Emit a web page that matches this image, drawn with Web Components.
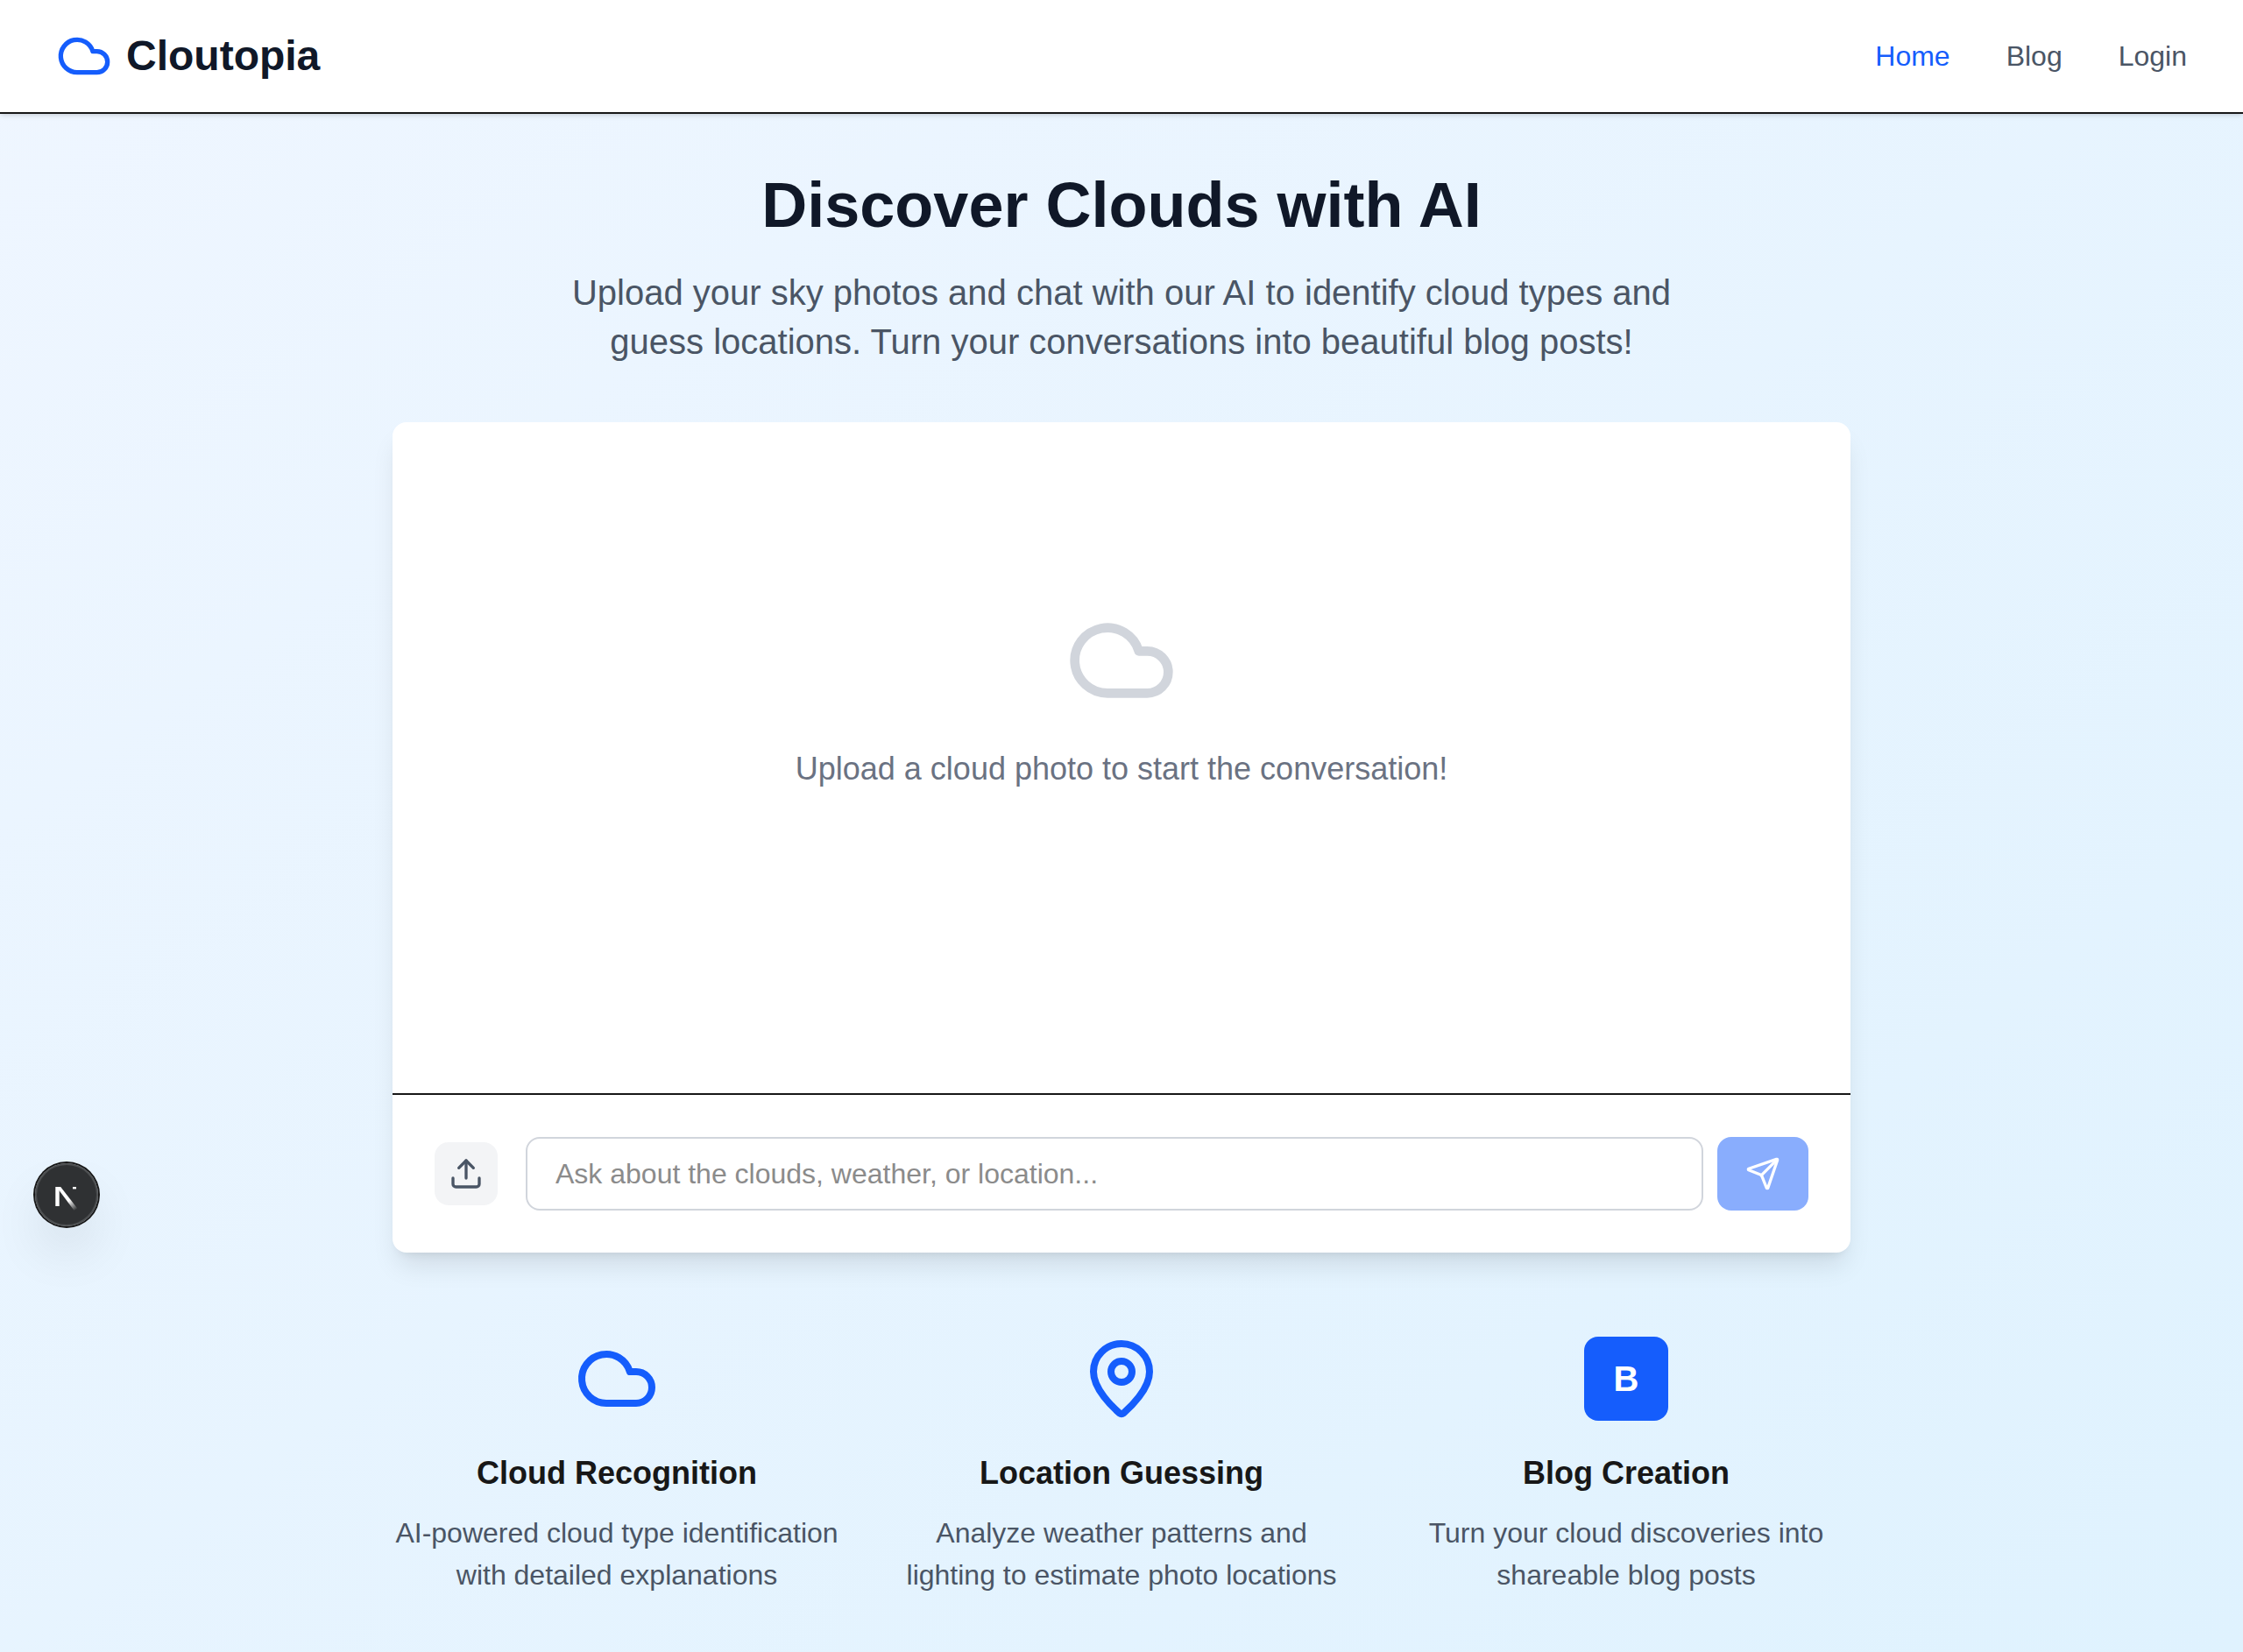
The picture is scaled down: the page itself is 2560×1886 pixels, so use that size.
<!DOCTYPE html>
<html lang="en">
<head>
<meta charset="utf-8">
<meta name="viewport" content="width=device-width, initial-scale=1">
<title>Cloutopia</title>
<style>
  body {
    margin: 0;
    min-height: 100vh;
    background: linear-gradient(to bottom right in oklab, #eff6ff, #dff2fe);
    color: #171717;
    font-family: "Liberation Sans", Arial, sans-serif;
    font-size: 32px;
    line-height: 48px;
  }
</style>
</head>
<body>
<cloud-app></cloud-app>

<script>
  const define = (name, html, setup) => {
    const template = document.createElement('template');
    template.innerHTML = html;
    customElements.define(name, class extends HTMLElement {
      constructor() {
        super();
        this.attachShadow({ mode: 'open' }).append(template.content.cloneNode(true));
      }
      connectedCallback() {
        if (setup) setup(this);
      }
    });
  };

  const ICONS = {
    cloud: '<path d="M17.5 19H9a7 7 0 1 1 6.71-9h1.79a4.5 4.5 0 1 1 0 9Z"/>',
    pin: '<path d="M20 10c0 4.993-5.539 10.193-7.399 11.799a1 1 0 0 1-1.202 0C9.539 20.193 4 14.993 4 10a8 8 0 0 1 16 0"/><circle cx="12" cy="10" r="3"/>',
    upload: '<path d="M12 3v12"/><path d="m17 8-5-5-5 5"/><path d="M21 15v4a2 2 0 0 1-2 2H5a2 2 0 0 1-2-2v-4"/>',
    send: '<path d="M14.536 21.686a.5.5 0 0 0 .937-.024l6.5-19a.496.496 0 0 0-.635-.635l-19 6.5a.5.5 0 0 0-.024.937l7.93 3.18a2 2 0 0 1 1.112 1.11z"/><path d="m21.854 2.147-10.94 10.939"/>'
  };

  define('line-icon', `
    <style>
      :host { display: block; flex: none; width: var(--size, 40px); height: var(--size, 40px); }
      svg { display: block; width: 100%; height: 100%; }
    </style>
    <svg viewBox="0 0 24 24" fill="none" stroke="currentColor" stroke-width="2" stroke-linecap="round" stroke-linejoin="round" aria-hidden="true"></svg>
  `, host => {
    host.shadowRoot.querySelector('svg').innerHTML = ICONS[host.getAttribute('name')];
  });

  define('nav-link', `
    <style>
      :host { display: block; color: #4a5565; }
      :host([current]) { color: #155dfc; }
      a { color: inherit; text-decoration: none; }
    </style>
    <a href="#"><slot></slot></a>
  `, host => {
    const link = host.shadowRoot.querySelector('a');
    link.href = host.getAttribute('href');
    if (host.hasAttribute('current')) link.setAttribute('aria-current', 'page');
  });

  define('site-header', `
    <style>
      :host { display: block; }
      header {
        display: flex; align-items: center; justify-content: space-between;
        padding: 32px 64px;
        background: #fff;
        border-bottom: 2px solid #171717;
        box-shadow: 0 2px 6px rgb(0 0 0 / .1), 0 2px 4px -2px rgb(0 0 0 / .1);
      }
      .brand {
        display: flex; align-items: center; gap: 16px;
        color: #101828; text-decoration: none;
        font-size: 48px; line-height: 64px; font-weight: 700;
      }
      line-icon { --size: 64px; color: #155dfc; }
      nav { display: flex; gap: 64px; }
    </style>
    <header>
      <a class="brand" href="#home"><line-icon name="cloud"></line-icon><span>Cloutopia</span></a>
      <nav aria-label="Main">
        <nav-link href="#home" current>Home</nav-link>
        <nav-link href="#blog">Blog</nav-link>
        <nav-link href="#login">Login</nav-link>
      </nav>
    </header>
  `);

  define('page-hero', `
    <style>
      :host { display: block; text-align: center; }
      ::slotted(h1) { margin: 0 0 32px; color: #101828; font-size: 72px; line-height: 80px; font-weight: 700; }
      ::slotted(p) { margin: 0 auto; max-width: 1344px; color: #4a5565; font-size: 40px; line-height: 56px; }
    </style>
    <slot></slot>
  `);

  define('chat-panel', `
    <style>
      :host {
        display: block; overflow: hidden;
        background: #fff; border-radius: 16px;
        box-shadow: 0 20px 30px -6px rgb(0 0 0 / .1), 0 8px 12px -8px rgb(0 0 0 / .1);
      }
      .messages { box-sizing: border-box; min-height: 766px; padding: 48px; }
      .empty {
        display: flex; flex-direction: column; align-items: center; gap: 32px;
        padding: 160px 0; color: #6a7282; font-size: 36px; line-height: 56px;
      }
      .empty line-icon { --size: 128px; color: #d1d5dc; }
      p { margin: 0; }
      form { display: flex; align-items: center; gap: 32px; padding: 48px; border-top: 2px solid #171717; }
      .ask { display: flex; flex: 1; gap: 16px; }
      button { display: block; border: 0; border-radius: 16px; }
      .upload { padding: 16px; background: #f3f4f6; color: #4a5565; }
      .send { padding: 22px 32px; background: #155dfc; color: #fff; opacity: .5; }
      input {
        flex: 1; min-width: 0; box-sizing: border-box; height: 84px; padding: 16px 32px;
        border: 2px solid #d1d5dc; border-radius: 16px; background: #fff;
        color: #171717; font: inherit;
      }
      input::placeholder { color: #8b8b8b; opacity: 1; }
    </style>
    <div class="messages">
      <div class="empty">
        <line-icon name="cloud"></line-icon>
        <p>Upload a cloud photo to start the conversation!</p>
      </div>
    </div>
    <form>
      <button class="upload" type="button" aria-label="Upload photo"><line-icon name="upload"></line-icon></button>
      <div class="ask">
        <input type="text" aria-label="Message" placeholder="Ask about the clouds, weather, or location...">
        <button class="send" type="submit" aria-label="Send" disabled><line-icon name="send"></line-icon></button>
      </div>
    </form>
  `);

  define('feature-card', `
    <style>
      :host { display: block; text-align: center; color: #4a5565; }
      .icon { display: flex; justify-content: center; margin-bottom: 32px; color: #155dfc; --size: 96px; }
      ::slotted(h3) { margin: 0 0 16px; color: #171717; font-size: 36px; line-height: 56px; font-weight: 700; }
      ::slotted(p) { margin: 0; }
    </style>
    <div class="icon"><slot name="icon"></slot></div>
    <slot></slot>
  `);

  define('letter-tile', `
    <style>
      :host {
        display: flex; align-items: center; justify-content: center;
        width: 96px; height: 96px; border-radius: 16px;
        background: #155dfc; color: #fff; font-size: 40px; line-height: 56px; font-weight: 700;
      }
    </style>
    <slot></slot>
  `);

  define('dev-badge', `
    <style>
      :host { position: fixed; left: 40px; bottom: 486px; }
      button {
        display: flex; align-items: center; justify-content: center;
        width: 72px; height: 72px; padding: 0; border: 0; border-radius: 50%;
        background: rgb(0 0 0 / .8);
        box-shadow: 0 0 0 2px #171717, inset 0 0 0 2px rgb(255 255 255 / .14), 0 32px 64px -16px rgb(0 0 0 / .24);
      }
      svg { display: block; width: 72px; height: 72px; }
    </style>
    <button type="button" aria-label="Open developer tools">
      <svg viewBox="0 0 72 72" fill="none" aria-hidden="true">
        <defs>
          <linearGradient id="slant" gradientUnits="userSpaceOnUse" x1="38" y1="43" x2="46" y2="54">
            <stop stop-color="#fff"/><stop offset="1" stop-color="#fff" stop-opacity="0"/>
          </linearGradient>
          <linearGradient id="tick" gradientUnits="userSpaceOnUse" x1="0" y1="27" x2="0" y2="30">
            <stop offset=".6" stop-color="#fff"/><stop offset="1" stop-color="#fff" stop-opacity="0"/>
          </linearGradient>
        </defs>
        <path d="M23.3 27h4.4v22h-4.4z" fill="#fff"/>
        <path d="M24.5 27h4.7l19 24.4-3.6 2.6z" fill="url(#slant)"/>
        <path d="M43 27h4v3h-4z" fill="url(#tick)"/>
      </svg>
    </button>
  `);

  define('cloud-app', `
    <style>
      :host { display: block; }
      main { box-sizing: border-box; max-width: 1792px; margin: 0 auto; padding: 64px; }
      chat-panel { margin: 64px 0 96px; }
      .features { display: grid; grid-template-columns: repeat(3, 1fr); gap: 64px; }
    </style>
    <site-header></site-header>
    <main>
      <page-hero>
        <h1>Discover Clouds with AI</h1>
        <p>Upload your sky photos and chat with our AI to identify cloud types and guess locations. Turn your conversations into beautiful blog posts!</p>
      </page-hero>
      <chat-panel></chat-panel>
      <section class="features">
        <feature-card>
          <line-icon slot="icon" name="cloud"></line-icon>
          <h3>Cloud Recognition</h3>
          <p>AI-powered cloud type identification with detailed explanations</p>
        </feature-card>
        <feature-card>
          <line-icon slot="icon" name="pin"></line-icon>
          <h3>Location Guessing</h3>
          <p>Analyze weather patterns and lighting to estimate photo locations</p>
        </feature-card>
        <feature-card>
          <letter-tile slot="icon">B</letter-tile>
          <h3>Blog Creation</h3>
          <p>Turn your cloud discoveries into shareable blog posts</p>
        </feature-card>
      </section>
    </main>
    <dev-badge></dev-badge>
  `);
</script>
</body>
</html>
